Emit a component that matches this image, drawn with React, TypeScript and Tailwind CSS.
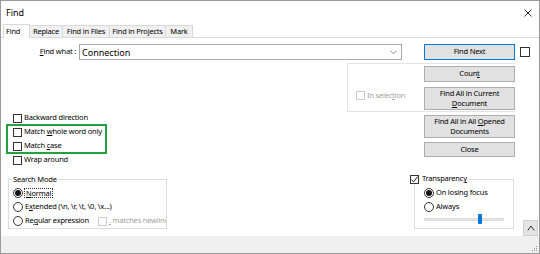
import React from "react";

const Box = ({ checked = false, disabled = false }: { checked?: boolean; disabled?: boolean }) => (
  <div
    className={
      disabled
        ? "w-[9px] h-[9px] shrink-0 border border-[#cccccc] bg-white"
        : "w-[9px] h-[9px] shrink-0 border border-[#333333] bg-white flex items-center justify-center"
    }
  >
    {checked && (
      <svg width="7" height="7" viewBox="0 0 7 7">
        <path d="M0.4 3.6 L2.6 5.9 L6.6 0.6" fill="none" stroke="#222" strokeWidth="1" />
      </svg>
    )}
  </div>
);

const Radio = ({ on = false }: { on?: boolean }) => (
  <div className="w-[10px] h-[10px] shrink-0 rounded-full border border-[#333333] bg-white flex items-center justify-center">
    {on && <div className="w-[6px] h-[6px] rounded-full bg-[#111111]" />}
  </div>
);

const Btn = ({ children, h, blue = false }: { children: React.ReactNode; h: string; blue?: boolean }) => (
  <div
    className={`${h} w-[91px] flex items-center justify-center text-center leading-[9.5px] bg-[#e1e1e1] border ${
      blue ? "border-[#0078d7]" : "border-[#adadad]"
    }`}
  >
    <div>{children}</div>
  </div>
);

const Tab = ({ children, w }: { children: React.ReactNode; w: string }) => (
  <div
    className={`${w} h-[12px] bg-[#f0f0f0] border border-l-0 border-b-0 border-[#d9d9d9] flex items-center justify-center whitespace-nowrap`}
  >
    {children}
  </div>
);

export default function App() {
  return (
    <div className="w-[540px] h-[254px] bg-white border border-[#9a9a9a] flex flex-col text-[7.5px] tracking-[-0.2px] text-black font-['Noto_Sans',sans-serif] leading-none overflow-hidden">
      {/* Title bar */}
      <div className="h-[23px] shrink-0 flex items-center justify-between pl-[5px] pr-[7px]">
        <span className="text-[9px] tracking-normal">Find</span>
        <svg width="8" height="8" viewBox="0 0 8 8">
          <path d="M0.5 0.5 L7.5 7.5 M7.5 0.5 L0.5 7.5" stroke="#111" strokeWidth="0.9" />
        </svg>
      </div>
      {/* Tabs */}
      <div className="h-[13px] shrink-0 flex items-end pl-[2px]">
        <div className="relative z-10 h-[14px] mb-[-1px] w-[27px] bg-white border border-b-0 border-[#d9d9d9] flex items-center pl-[2px]">
          Find
        </div>
        <Tab w="w-[33px]">Replace</Tab>
        <Tab w="w-[47px]">Find in Files</Tab>
        <Tab w="w-[56px]">Find in Projects</Tab>
        <Tab w="w-[27px]">Mark</Tab>
      </div>
      {/* Content */}
      <div className="flex-1 flex flex-col border-t border-[#d9d9d9]">
        {/* Row A */}
        <div className="mt-[6px] h-[16px] flex items-center">
          <div className="w-[78px] text-right pr-[3px]">
            <u>F</u>ind what :
          </div>
          <div className="w-[323px] h-[16px] border border-[#a8a8a8] flex items-center justify-between pl-[2px] pr-[4px] text-[9px] tracking-normal">
            <span>Connection</span>
            <svg width="7" height="5" viewBox="0 0 7 5">
              <path d="M0.5 0.8 L3.5 3.8 L6.5 0.8" fill="none" stroke="#666" strokeWidth="0.8" />
            </svg>
          </div>
          <div className="ml-[22px]">
            <Btn h="h-[16px]" blue>
              Find Next
            </Btn>
          </div>
          <div className="ml-[5px] w-[10px] h-[10px] border border-[#333333] bg-white" />
        </div>
        {/* Row B */}
        <div className="flex">
          <div className="relative w-[346px] pt-[51px] pl-[12px]">
            <div className="flex items-center h-[14px] gap-[2px]">
              <Box />
              <span>Backward direction</span>
            </div>
            <div className="flex items-center h-[14px] gap-[2px]">
              <Box />
              <span>
                Match <u>w</u>hole word only
              </span>
            </div>
            <div className="flex items-center h-[14px] gap-[2px]">
              <Box />
              <span>
                Match <u>c</u>ase
              </span>
            </div>
            <div className="flex items-center h-[14px] gap-[2px]">
              <Box />
              <span>Wrap around</span>
            </div>
            <div className="absolute left-[5px] top-[64px] w-[101px] h-[30px] border-2 border-[#22a23e]" />
          </div>
          <div className="mt-[3px] flex flex-col">
            <div className="w-[168px] h-[49px] border border-r-0 border-[#e3e3e3] flex">
              <div className="w-[76px] pl-[8px] pt-[27px]">
                <div className="flex items-center gap-[2px] text-[#a0a0a0]">
                  <Box disabled />
                  <span>
                    In selec<u>t</u>ion
                  </span>
                </div>
              </div>
              <div className="flex flex-col pt-[2px]">
                <Btn h="h-[16px]">
                  Coun<u>t</u>
                </Btn>
                <div className="mt-[5px]">
                  <Btn h="h-[23px]">
                    Find All in Current
                    <br />
                    <u>D</u>ocument
                  </Btn>
                </div>
              </div>
            </div>
            <div className="ml-[77px] mt-[3px]">
              <Btn h="h-[23px]">
                Find All in All <u>O</u>pened
                <br />
                Documents
              </Btn>
            </div>
            <div className="ml-[77px] mt-[4px]">
              <Btn h="h-[15px]">Close</Btn>
            </div>
          </div>
        </div>
        {/* Row C */}
        <div className="flex-1 mt-[7px] flex items-start">
          <fieldset className="ml-[7px] w-[159px] border border-[#dcdcdc] pt-[2px] min-w-0">
            <legend className="ml-[2px] px-[2px] leading-[10px] h-[10px]">Search Mode</legend>
            <div className="pl-[4px]">
              <div className="flex items-center h-[14px] gap-[1px]">
                <Radio on />
                <span className="border border-dotted border-[#333] px-[1px] leading-[8px]">
                  <u>N</u>ormal
                </span>
              </div>
              <div className="flex items-center h-[14px] gap-[2px]">
                <Radio />
                <span>
                  E<u>x</u>tended (\n, \r, \t, \0, \x...)
                </span>
              </div>
              <div className="flex items-center h-[14px] gap-[2px] whitespace-nowrap overflow-hidden">
                <Radio />
                <span>
                  Re<u>g</u>ular expression
                </span>
                <div className="ml-[7px] flex items-center gap-[2px] text-[#a0a0a0]">
                  <Box disabled />
                  <span>
                    <u>.</u> matches newline
                  </span>
                </div>
              </div>
            </div>
          </fieldset>
          <div className="ml-[243px] w-[104px] flex flex-col">
            <div className="relative z-10 h-[10px] flex items-center gap-[3px] bg-white w-fit pr-[2px]">
              <Box checked />
              <span>
                Transparenc<u>y</u>
              </span>
            </div>
            <div className="ml-[4px] mt-[-5px] w-[100px] border border-[#dcdcdc] pt-[6px] pb-[4px] pl-[9px]">
              <div className="flex items-center h-[14px] gap-[2px]">
                <Radio on />
                <span>On losing focus</span>
              </div>
              <div className="flex items-center h-[14px] gap-[2px]">
                <Radio />
                <span>Always</span>
              </div>
              <div className="h-[10px] flex items-center">
                <div className="w-[80px] h-[3px] bg-[#e7e7e7] border border-[#dadada] flex items-center">
                  <div className="ml-[53px] w-[4px] h-[10px] bg-[#0078d7] rounded-[1px]" />
                </div>
              </div>
            </div>
          </div>
          <div className="self-end ml-[9px] w-[15px] h-[16px] bg-[#e5e5e5] border border-[#cfcfcf] flex items-center justify-center">
            <svg width="8" height="6" viewBox="0 0 8 6">
              <path d="M0.8 5.5 L4 1 L7.2 5.5" fill="none" stroke="#222" strokeWidth="0.9" />
            </svg>
          </div>
        </div>
      </div>
      {/* Bottom strip */}
      <div className="h-[17px] shrink-0 bg-[#f0f0f0] flex justify-end items-end pr-[1px] pb-[1px]">
        <svg width="6" height="6" viewBox="0 0 6 6">
          <rect x="4" y="0" width="1" height="1" fill="#999" />
          <rect x="2" y="2" width="1" height="1" fill="#999" />
          <rect x="4" y="2" width="1" height="1" fill="#999" />
          <rect x="0" y="4" width="1" height="1" fill="#999" />
          <rect x="2" y="4" width="1" height="1" fill="#999" />
          <rect x="4" y="4" width="1" height="1" fill="#999" />
        </svg>
      </div>
    </div>
  );
}
